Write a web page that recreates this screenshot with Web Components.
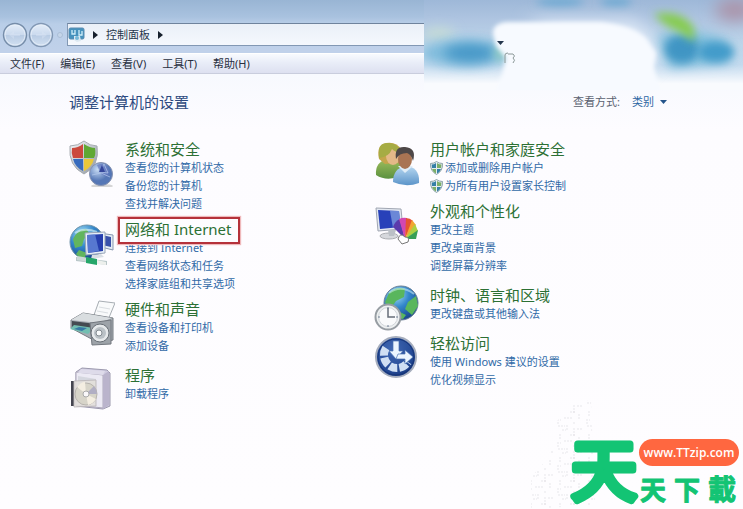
<!DOCTYPE html>
<html lang="zh-CN">
<head>
<meta charset="utf-8">
<title>控制面板</title>
<style>
html,body{margin:0;min-height:100%;background:#fdfcfe}
body{font-family:"Noto Sans","Noto Sans CJK SC",sans-serif;font-size:11px;line-height:18px;color:#333}
</style>
</head>
<body>
<control-panel></control-panel>

<template id="t-panel">
<style>
:host{display:block;position:relative;min-height:100vh;overflow:hidden;background:linear-gradient(#f7f9fe 74px,#fdfcff 130px,#fefdff)}
main{padding:0 64px 0 69px}
.head{display:flex;align-items:center;justify-content:space-between;height:56px;padding-right:12px}
h1{margin:0;font-size:15px;line-height:20px;font-weight:400;color:#2d4a80}
.cols{display:grid;grid-template-columns:1fr 1fr;padding-top:9px}
.col{display:flex;flex-direction:column}
.wide{padding-bottom:4px}
haze-art{position:absolute;right:0;top:0}
site-mark{position:absolute;right:0;bottom:0}
</style>
<title-area></title-area>
<menu-bar></menu-bar>
<haze-art></haze-art>
<main>
 <div class="head"><h1>调整计算机的设置</h1><view-mode></view-mode></div>
 <div class="cols">
  <div class="col">
   <panel-group icon="security" heading="系统和安全"><panel-link>查看您的计算机状态</panel-link><panel-link>备份您的计算机</panel-link><panel-link>查找并解决问题</panel-link></panel-group>
   <panel-group icon="network" heading="网络和 Internet" marked><panel-link>连接到 Internet</panel-link><panel-link>查看网络状态和任务</panel-link><panel-link>选择家庭组和共享选项</panel-link></panel-group>
   <panel-group class="wide" icon="printer" heading="硬件和声音"><panel-link>查看设备和打印机</panel-link><panel-link>添加设备</panel-link></panel-group>
   <panel-group icon="program" heading="程序"><panel-link>卸载程序</panel-link></panel-group>
  </div>
  <div class="col">
   <panel-group icon="users" heading="用户帐户和家庭安全"><panel-link shield>添加或删除用户帐户</panel-link><panel-link shield>为所有用户设置家长控制</panel-link></panel-group>
   <panel-group class="wide" icon="look" heading="外观和个性化"><panel-link>更改主题</panel-link><panel-link>更改桌面背景</panel-link><panel-link>调整屏幕分辨率</panel-link></panel-group>
   <panel-group class="wide" icon="clock" heading="时钟、语言和区域"><panel-link>更改键盘或其他输入法</panel-link></panel-group>
   <panel-group icon="access" heading="轻松访问"><panel-link>使用 Windows 建议的设置</panel-link><panel-link>优化视频显示</panel-link></panel-group>
  </div>
 </div>
</main>
<site-mark></site-mark>
</template>

<template id="t-title">
<style>
:host{display:block;padding:22px 0 6px 2px;background:linear-gradient(#99b5d4,#a9c2df 17px,#b9cee8 24px,#c0d1ea 50px)}
.row{display:flex;align-items:center;height:25px}
button{border:0;padding:0;background:none;font:inherit;color:#26364b;display:block}
.nav{width:26px;height:26px}
.drop{width:12px;height:12px}
.addr{flex:1;display:flex;align-items:center;gap:8px;box-sizing:border-box;height:23px;margin-left:1px;border:1px solid #8298b4;border-top-color:#6f839d;background:linear-gradient(#eaf0f8,#f5f8fd)}
svg{display:block}
</style>
<div class="row">
 <button class="nav" aria-label="后退"><svg width="26" height="26" viewBox="0 0 26 26"><defs><linearGradient id="n" x2="0" y2="1"><stop stop-color="#e5eef9"/><stop offset=".48" stop-color="#cbdaee"/><stop offset=".52" stop-color="#b9cce4"/><stop offset="1" stop-color="#d3e1f2"/></linearGradient></defs><circle cx="13" cy="13" r="11.5" fill="url(#n)" stroke="#768da9" stroke-width="1.4"/><circle cx="13" cy="13" r="10" fill="none" stroke="#e9f1fa" opacity=".7"/><path d="M7 13l5-4v3h6v2h-6v3z" fill="#dce7f4" opacity=".4"/></svg></button>
 <button class="nav" aria-label="前进"><svg width="26" height="26" viewBox="0 0 26 26"><defs><linearGradient id="n2" x2="0" y2="1"><stop stop-color="#e5eef9"/><stop offset=".48" stop-color="#cbdaee"/><stop offset=".52" stop-color="#b9cce4"/><stop offset="1" stop-color="#d3e1f2"/></linearGradient></defs><circle cx="13" cy="13" r="11.5" fill="url(#n2)" stroke="#8298b4" stroke-width="1.4"/><circle cx="13" cy="13" r="10" fill="none" stroke="#e9f1fa" opacity=".7"/><path d="M19 13l-5-4v3H8v2h6v3z" fill="#dce7f4" opacity=".4"/></svg></button>
 <button class="drop" aria-label="最近的页面"><svg width="12" height="12"><circle cx="6" cy="6" r="2.5" fill="#c5d5e9" stroke="#a5b9d2" stroke-width=".8"/></svg></button>
 <div class="addr">
  <svg width="17" height="17" viewBox="0 0 17 17"><rect x="1" y="2" width="15" height="11" rx="1.5" fill="#4692bd" stroke="#5a8bb0"/><path d="M4 4v4h3V4M11 4v5h3V5" fill="none" stroke="#d0eef9" stroke-width="1.3"/><path d="M6 10l6 0 1 5-4 1-3-2z" fill="#dce8f1"/><circle cx="9" cy="12" r="2" fill="#76b9d8"/></svg>
  <svg width="5" height="8"><path d="M0 0l5 4-5 4z" fill="#17202d"/></svg>
  <button>控制面板</button>
  <svg width="5" height="8"><path d="M0 0l5 4-5 4z" fill="#17202d"/></svg>
 </div>
</div>
</template>

<template id="t-menu">
<style>
:host{display:flex;gap:16px;height:19px;padding-left:10px;border-top:1px solid #fff;border-bottom:1px solid #c9cddd;background:linear-gradient(#f8fafe,#e9edf8 45%,#dde0f0)}
button{border:0;padding:0;background:none;font:inherit;color:#29303f}
</style>
<button>文件(F)</button><button>编辑(E)</button><button>查看(V)</button><button>工具(T)</button><button>帮助(H)</button>
</template>

<template id="t-view">
<style>
:host{display:flex;align-items:center;gap:12px}
label{color:#59616f}
.pick{display:flex;align-items:center;gap:6px}
select{appearance:none;border:0;padding:0;margin:0;background:none;font:inherit;color:#2c65a3}
</style>
<label for="mode">查看方式:</label><span class="pick"><select id="mode"><option>类别</option></select><svg width="7" height="4"><path d="M0 0h7L3.500 4z" fill="#24558b"/></svg></span>
</template>

<template id="t-haze">
<style>:host{display:block;pointer-events:none}svg{display:block}</style>
<svg width="319" height="90" viewBox="0 0 319 90" aria-hidden="true">
<defs>
<filter id="b8" x="-100%" y="-100%" width="300%" height="300%"><feGaussianBlur stdDeviation="8"/></filter>
<filter id="b5" x="-100%" y="-200%" width="300%" height="500%"><feGaussianBlur stdDeviation="6"/></filter>
<filter id="b4" x="-100%" y="-100%" width="300%" height="300%"><feGaussianBlur stdDeviation="4"/></filter>
<filter id="b2" x="-20%" y="-20%" width="140%" height="140%"><feGaussianBlur stdDeviation="2"/></filter>
<linearGradient id="g" x2="0" y2="1"><stop stop-color="#9eb8d8"/><stop offset=".22" stop-color="#afc5e1"/><stop offset=".5" stop-color="#bed6ea"/><stop offset=".72" stop-color="#c4daee"/><stop offset=".93" stop-color="#f9fbfe"/></linearGradient>
<clipPath id="c"><rect width="319" height="90"/></clipPath>
</defs>
<g clip-path="url(#c)">
<rect width="319" height="90" fill="url(#g)"/>
<ellipse cx="15" cy="34" rx="16" ry="6" fill="#c8ddd4" filter="url(#b5)"/>
<ellipse cx="40" cy="53" rx="44" ry="13" fill="#7fbbdc" filter="url(#b5)"/>
<ellipse cx="46" cy="53" rx="26" ry="9" fill="#4698c8" filter="url(#b5)"/>
<ellipse cx="76" cy="53" rx="6" ry="8" fill="#8fcac4" filter="url(#b4)"/>
<ellipse cx="136" cy="2" rx="24" ry="4" fill="#69a8d2" filter="url(#b4)"/>
<ellipse cx="192" cy="2" rx="16" ry="4" fill="#69a8d2" filter="url(#b4)"/>
<ellipse cx="311" cy="10" rx="20" ry="11" fill="#ab93a8" filter="url(#b8)"/>
<path d="M100 20h110l20 16 6 20-20 20z" fill="#dde7f6" filter="url(#b8)"/>
<path d="M234 36q40-10 70 6l2 20-60 6z" fill="#7dbddb" filter="url(#b5)"/>
<ellipse cx="258" cy="49" rx="17" ry="14" fill="#3f95c4" filter="url(#b4)"/>
<ellipse cx="292" cy="52" rx="18" ry="10" fill="#439bca" filter="url(#b4)"/>
<path d="M230 14q28-5 40 14l0 14-14-10q-16-6-26-18z" fill="#86cc50" filter="url(#b4)"/>
<path d="M69 34Q68 23 84 22L132 22 177 22Q208 25 222 38L232 53 230 68 238 96 70 96 78 74 82 58 72 46Z" fill="#f7faff" filter="url(#b2)"/>
</g>
<path d="M73 41h7l-3.500 4z" fill="#24364d"/>
<path d="M81 63v-8q0-2 3-2M84 54h5q3 2 0 4 3 2 0 5" fill="none" stroke="#8b9898"/>
</svg>
</template>

<template id="t-group">
<style>
:host{display:block;margin-bottom:6px}
section{display:grid;grid-template-columns:46px 1fr;column-gap:10px;align-items:start}
h2{position:relative;width:fit-content;margin:0;font-size:15px;line-height:20px;font-weight:400;color:#2c7034}
h2 a{color:inherit;text-decoration:none}
.icon{height:0;overflow:visible}
.links{display:flex;flex-direction:column}
.mark{display:none}
:host([marked]) .mark{display:block;position:absolute;inset:-2px -9px -5px -7px;border:2px solid #b5323b;box-shadow:0 0 1px 1px #efb9bb}
svg{display:block}
</style>
<section><div class="icon"></div><div><h2><a href="#"></a><span class="mark"></span></h2><div class="links"><slot></slot></div></div></section>
</template>

<template id="t-link">
<style>
:host{display:flex;align-items:center;gap:2px;height:18px}
a{color:#316aa7;text-decoration:none;white-space:nowrap}
svg{display:none}
:host([shield]) svg{display:block}
</style>
<svg width="13" height="14" viewBox="0 0 13 14"><path d="M6.500.5Q9 2.500 12.500 2.500 13 10 6.500 13.500 0 10 .5 2.500 4 2.500 6.500.5Z" fill="#e5edf0" stroke="#758f96" stroke-width=".8"/><path d="M6 2v5H2L1.700 3.500Q4 3.500 6 2ZM7 8h4Q10 11 7 12.500Z" fill="#347fa6"/><path d="M7 2Q9 3.500 11.500 3.500L11 7H7ZM2 8h4v4.500Q3 11 2 8Z" fill="#7bae67"/></svg>
<a href="#"><slot></slot></a>
</template>

<template id="t-mark">
<style>
:host{display:block;width:216px;height:110px;pointer-events:none}
svg{display:block}
text{font-family:"Liberation Sans","Noto Sans CJK TC",sans-serif;font-weight:700;fill:#13c474;stroke:#13c474;stroke-linejoin:round;stroke-linecap:round}
.big{font-weight:400}
.url{font-family:"Open Sans","Noto Sans",sans-serif;font-size:12px;font-weight:600;fill:#fff;stroke:none}
</style>
<svg width="216" height="110" viewBox="0 0 216 110">
<defs><pattern id="p" width="29" height="23" patternUnits="userSpaceOnUse"><path d="M1 1h3M17 1h2M2 4h7M11 3v5M21 7h5M6 8h4M4 12v5M18 6v8M8 19h9M23 15v6M14 13h6M1 21h4" stroke="#d9d6de" stroke-width=".6" stroke-dasharray="2 1"/></pattern></defs>
<path d="M46 5l18-4 1 28 3 77-64 4V78l18-20 7-35z" fill="url(#p)"/>
<text class="big" x="44" y="96" font-size="66" stroke-width="7">天</text>
<rect x="112" y="40" width="100" height="27" rx="13.500" fill="#ff6740"/>
<text class="url" x="162" y="58" text-anchor="middle">www.TTzip.com</text>
<text x="113" y="101" font-size="26" stroke-width="1">天</text><text x="147" y="101" font-size="26" stroke-width="1">下</text><text x="181" y="101" font-size="28">載</text>
</svg>
</template>

<script>
const globe = `<defs><radialGradient id="gl" cx=".35" cy=".25" r=".85"><stop stop-color="#a9e0f4"/><stop offset=".45" stop-color="#3387cb"/><stop offset="1" stop-color="#143b83"/></radialGradient></defs>`;
const icons = {
security: `<defs><linearGradient id="sh" x2="1" y2="1"><stop stop-color="#f7f9fb"/><stop offset="1" stop-color="#8b949e"/></linearGradient><radialGradient id="sb" cx=".35" cy=".3"><stop stop-color="#c8dcf5"/><stop offset="1" stop-color="#5577b6"/></radialGradient></defs>
<path d="M15 2Q21 7 28 7 31 27 15 35-1 27 1 7 9 7 15 2Z" fill="url(#sh)" stroke="#a5aab0"/><path d="M14 5v14H4Q2 14 3 9 9 9 14 5Z" fill="#cb493d"/><path d="M15 5q6 4 11 4 1 6-1 10H15Z" fill="#5fa833"/><path d="M4 20h10v12Q6 28 4 20Z" fill="#376bbd"/><path d="M15 20h10q-2 8-10 12Z" fill="#e9c83a"/><ellipse cx="33" cy="47" rx="11" ry="2" fill="#bbb" opacity=".6"/><circle cx="32" cy="35" r="11.500" fill="url(#sb)" stroke="#8793b0"/><path d="M32 35l-4-9q7-3 11 3 3 6-1 9z" fill="#6376bd" opacity=".7"/><path d="M31 33l4-8 4 9zM23 36l9-2 9 4" fill="none" stroke="#b5c9ed" opacity=".7"/><path d="M33 26l3 7h-6z" fill="#35479b"/>`,
network: globe+`<g transform="translate(0 2)"><circle cx="18" cy="21" r="17" fill="url(#gl)" stroke="#6f93aa"/><path d="M4 18q4-9 13-10l4 5-6 5-2 7-7 2zM10 29l8 3-3 6q-5-1-8-5z" fill="#62b55e"/><path d="M6 12q9-6 22-1" fill="none" stroke="#d5f0f3" stroke-width="2" opacity=".65"/><path d="M30 12l14 2v15l-12-3z" fill="#e5edf5" stroke="#8797af"/><path d="M33 14l9 2v10l-9-2z" fill="#3851aa"/><path d="M16 12l20-1v21l-19 2z" fill="#e7eff8" stroke="#99a6b8"/><path d="M18 14l16-1v17l-15 2z" fill="#263fae"/><path d="M18 14l8-1 4 17-11 2z" fill="#6c92de" opacity=".7"/><path d="M23 34l9-1 3 3-13 2z" fill="#d9dfe5"/><path d="M7 36l31 4v4L7 40z" fill="#b8c6c8"/><path d="M8 35l12 2v4L8 39z" fill="#cbd8d6"/><path d="M17 36l11 2v6l-11-2z" fill="#26a66a"/><path d="M28 39l9 2v3l-9-1z" fill="#edf0ed"/></g>`,
printer: `<path d="M25 16L30 2l16 2-7 17z" fill="#f9fafb" stroke="#a7adb3"/><path d="M30 8l11 2M28 12l11 2" stroke="#d9dde1"/><path d="M2 21l12-7 30 5v22l-14 3L2 29z" fill="#a5abb2" stroke="#777c83"/><path d="M2 21l12-7 29 5-13 5z" fill="#d9dde0"/><path d="M3 22l24 3v7L3 29z" fill="#454b52"/><path d="M5 26l20 3-6 6-18-5z" fill="#72beb1"/><path d="M10 28l8 1-5 3-8-2z" fill="#3778a4"/><path d="M21 24l21-3v24l-19 1z" fill="#9da3a9" stroke="#72777e"/><circle cx="31" cy="34" r="9" fill="#e6e9eb" stroke="#686f76"/><circle cx="31" cy="34" r="6" fill="#bac1c6"/><circle cx="30" cy="34" r="3" fill="#f8fafb" stroke="#848b91"/>`,
program: `<path d="M7 7l6-4 25 2 3 3v33l-7 3-27-3z" fill="#cfcbe0" stroke="#9c99ae"/><path d="M7 7l27 3v33L7 40z" fill="#eceaf4" stroke="#afaabc"/><path d="M34 10l6-4v34l-6 4z" fill="#bab4cc"/><path d="M12 4l24 2-2 4-25-2z" fill="#dedbea"/><path d="M9 11l18 3v25L9 37z" fill="#d5d7df"/><path d="M2 16h3v25H2z" fill="#454550"/><path d="M5 16l22-1v26L5 42z" fill="#e4e0dc" opacity=".9" stroke="#bdb8ba"/><circle cx="17" cy="29" r="11" fill="#d7d4c9" stroke="#b8b4ae"/><path d="M17 29L8 22q4-5 8-5zM17 29l10 5q-3 5-8 6z" fill="#f4eee2"/><path d="M17 29l8-8q3 4 3 8z" fill="#b1aec4"/><circle cx="17" cy="29" r="3" fill="#faf8fa" stroke="#aaa"/>`,
users: `<defs><linearGradient id="ug" x2="0" y2="1"><stop stop-color="#9ebd5c"/><stop offset="1" stop-color="#5b9140"/></linearGradient><linearGradient id="ub" x2="0" y2="1"><stop stop-color="#b8d8f1"/><stop offset="1" stop-color="#5b94c9"/></linearGradient></defs><path d="M2 36Q1 23 13 20l13 4q3 7 0 13-13 6-24-1z" fill="url(#ug)"/><path d="M5 20Q2 6 12 4t16 7l-2 13-15 1z" fill="#c4a54b"/><ellipse cx="19" cy="17" rx="7" ry="9" fill="#e4b988"/><path d="M5 15Q4 3 15 4t13 11q-7-2-10-5-3 8-13 9z" fill="#a6ac44"/><path d="M19 43q0-14 13-16 14 1 13 17-13 5-26-1z" fill="url(#ub)"/><path d="M24 27l7 7 8-7" fill="#e0edf7"/><ellipse cx="31" cy="20" rx="7" ry="10" fill="#a97453"/><path d="M22 20Q20 7 31 8q12 1 8 14-2-7-6-8-8 0-11 6z" fill="#4e4848"/>`,
look: `<g transform="translate(1 2)"><path d="M1 5l25 1 2 20-25 2z" fill="#e3e8f1" stroke="#a0a6b2"/><path d="M3 7l21 1 2 16-21 2z" fill="#2841b9"/><path d="M15 8l9 0 2 16-8 1z" fill="#819fe1" opacity=".75"/><ellipse cx="14" cy="33" rx="9" ry="3" fill="#d6d8dc" stroke="#abadb1"/><path d="M13 27h8l-2 6h-5z" fill="#bbc0c6"/><path d="M30 36L18 24q2-6 7-8z" fill="#5b3bac"/><path d="M30 36l-6-20q4-2 8-1z" fill="#d247b2"/><path d="M30 36l1-21q4 0 7 3z" fill="#e65332"/><path d="M30 36l7-19 4 5z" fill="#f2a632"/><path d="M30 36l10-15 3 7z" fill="#acd043"/><path d="M30 36l13-9-2 9z" fill="#379f55"/><path d="M23 36q2-7 7-2 5 0 3 5l-6 2z" fill="#fff" stroke="#777"/></g>`,
clock: globe+`<circle cx="27" cy="18" r="17" fill="url(#gl)" stroke="#6a7f96"/><path d="M15 8q8-7 16-4l-1 8-8 4-7 10-4-9zM34 17l8-6 2 10-6 9-7-6zM26 27l6 3-3 4-6-1z" fill="#59b65d"/><path d="M15 8q12-9 25 1" fill="none" stroke="#dcf8fb" stroke-width="2" opacity=".5"/><circle cx="14" cy="32" r="12.500" fill="#edf0f1" stroke="#979da3" stroke-width="2"/><circle cx="14" cy="32" r="9.500" fill="#f9fafb" stroke="#d1d5d9"/><path d="M14 23v9h7" fill="none" stroke="#656e78" stroke-width="1.500"/><path d="M14 22v2M14 40v2M4 32h2M22 32h2" stroke="#6e7e93"/>`,
access: `<defs><radialGradient id="ab" cx=".4" cy=".3" r=".8"><stop stop-color="#4068b3"/><stop offset=".7" stop-color="#234894"/><stop offset="1" stop-color="#143073"/></radialGradient></defs><g transform="translate(1 2)"><circle cx="21" cy="22" r="20" fill="url(#ab)" stroke="#a6adbd" stroke-width="2"/><circle cx="21" cy="22" r="18" fill="none" stroke="#173476"/><path d="M11 13A13 13 0 1 0 33 27" fill="none" stroke="#d0dff3" stroke-width="8" stroke-dasharray="8 2"/><path d="M18 6h6v10h4l-7 8-7-8h4z" fill="#ecf6ff" stroke="#4b74b3" stroke-width=".7"/><path d="M23 19h7v-4l8 7-8 7v-5h-9z" fill="#ecf6ff" stroke="#4b74b3" stroke-width=".7"/></g>`
};
function define(name, template, setup) {
  customElements.define(name, class extends HTMLElement {
    connectedCallback() {
      if (this.shadowRoot) return;
      const root = this.attachShadow({mode: "open"});
      root.append(document.getElementById(template).content.cloneNode(true));
      if (setup) setup(this, root);
    }
  });
}
define("panel-link", "t-link");
define("panel-group", "t-group", (host, root) => {
  root.querySelector("h2 a").textContent = host.getAttribute("heading");
  root.querySelector(".icon").innerHTML = `<svg width="46" height="48" viewBox="0 0 46 48" aria-hidden="true">${icons[host.getAttribute("icon")]}</svg>`;
});
define("title-area", "t-title");
define("menu-bar", "t-menu");
define("view-mode", "t-view");
define("haze-art", "t-haze");
define("site-mark", "t-mark");
define("control-panel", "t-panel");
</script>
</body>
</html>
